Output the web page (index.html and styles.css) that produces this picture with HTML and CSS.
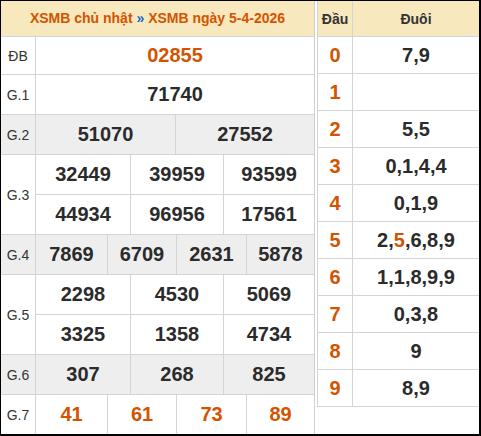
FILE: index.html
```html
<!DOCTYPE html>
<html lang="vi">
<head>
<meta charset="utf-8">
<title>XSMB ngày 5-4-2026</title>
<link rel="stylesheet" href="styles.css">
</head>
<body>
<div class="frame">
  <div class="results">
    <div class="rhead"><span class="hl">XSMB chủ nhật</span> <span class="sep">»</span> <span class="hl">XSMB ngày 5-4-2026</span></div>
    <div class="prize prize-db">
      <div class="lbl">ĐB</div>
      <div class="nums c1"><div class="n hot">02855</div></div>
    </div>
    <div class="prize">
      <div class="lbl">G.1</div>
      <div class="nums c1"><div class="n">71740</div></div>
    </div>
    <div class="prize alt">
      <div class="lbl">G.2</div>
      <div class="nums c2"><div class="n">51070</div><div class="n">27552</div></div>
    </div>
    <div class="prize dbl">
      <div class="lbl">G.3</div>
      <div class="stack">
        <div class="nums c3"><div class="n">32449</div><div class="n">39959</div><div class="n">93599</div></div>
        <div class="nums c3"><div class="n">44934</div><div class="n">96956</div><div class="n">17561</div></div>
      </div>
    </div>
    <div class="prize alt">
      <div class="lbl">G.4</div>
      <div class="nums c4"><div class="n">7869</div><div class="n">6709</div><div class="n">2631</div><div class="n">5878</div></div>
    </div>
    <div class="prize dbl">
      <div class="lbl">G.5</div>
      <div class="stack">
        <div class="nums c3"><div class="n">2298</div><div class="n">4530</div><div class="n">5069</div></div>
        <div class="nums c3"><div class="n">3325</div><div class="n">1358</div><div class="n">4734</div></div>
      </div>
    </div>
    <div class="prize alt">
      <div class="lbl">G.6</div>
      <div class="nums c3"><div class="n">307</div><div class="n">268</div><div class="n">825</div></div>
    </div>
    <div class="prize last">
      <div class="lbl">G.7</div>
      <div class="nums c4"><div class="n hot">41</div><div class="n hot">61</div><div class="n hot">73</div><div class="n hot">89</div></div>
    </div>
  </div>
  <div class="loto">
    <div class="lrow lhead"><div class="dau">Đầu</div><div class="duoi">Đuôi</div></div>
    <div class="lrow"><div class="dau">0</div><div class="duoi">7,9</div></div>
    <div class="lrow"><div class="dau">1</div><div class="duoi"></div></div>
    <div class="lrow"><div class="dau">2</div><div class="duoi">5,5</div></div>
    <div class="lrow"><div class="dau">3</div><div class="duoi">0,1,4,4</div></div>
    <div class="lrow"><div class="dau">4</div><div class="duoi">0,1,9</div></div>
    <div class="lrow"><div class="dau">5</div><div class="duoi">2,<span class="hot">5</span>,6,8,9</div></div>
    <div class="lrow"><div class="dau">6</div><div class="duoi">1,1,8,9,9</div></div>
    <div class="lrow"><div class="dau">7</div><div class="duoi">0,3,8</div></div>
    <div class="lrow"><div class="dau">8</div><div class="duoi">9</div></div>
    <div class="lrow"><div class="dau">9</div><div class="duoi">8,9</div></div>
  </div>
</div>
</body>
</html>
```

FILE: styles.css
```css
* { box-sizing: border-box; }
html, body { margin: 0; padding: 0; background: #fff; }
body { font-family: "Liberation Sans", Arial, sans-serif; color: #2b2b2b; }

.frame {
  width: 481px;
  height: 436px;
  border: 1px solid #000;
  border-right-width: 2px;
  border-bottom-width: 2px;
  display: flex;
  align-items: flex-start;
  gap: 2px;
  overflow: hidden;
  background: #fff;
}

/* results table */
.results {
  width: 314px;
  flex: none;
  border-right: 1px solid #cfcfcf;
  height: 433px;
}
.rhead {
  height: 36px;
  line-height: 35px;
  background: #f8e8be;
  border-bottom: 1px solid #d4d4d4;
  text-align: center;
  font-weight: bold;
  font-size: 14px;
  color: #d35400;
}
.rhead .sep { color: #1a6bc4; }

.prize {
  display: flex;
  height: 40px;
  border-bottom: 1px solid #d4d4d4;
}
.prize-db { height: 38px; }
.prize.dbl { height: 80px; }
.prize.last { border-bottom: none; height: 39px; }
.prize.alt { background: #eeeeee; }

.lbl {
  width: 35px;
  flex: none;
  border-right: 1px solid #d4d4d4;
  display: flex;
  align-items: center;
  justify-content: center;
  font-size: 14px;
  color: #333;
}
.stack { flex: 1; display: flex; flex-direction: column; }
.stack .nums { flex: 1; }
.stack .nums:first-child { border-bottom: 1px solid #d4d4d4; }

.nums {
  flex: 1;
  display: grid;
  align-items: center;
}
.c1 { grid-template-columns: 1fr; }
.c2 { grid-template-columns: 1fr 1fr; }
.c3 { grid-template-columns: 94px 93px 1fr; }
.c4 { grid-template-columns: 71px 69px 70px 1fr; }

.n {
  height: 100%;
  display: flex;
  align-items: center;
  justify-content: center;
  font-weight: bold;
  font-size: 20px;
  color: #2b2b2b;
}
.n + .n { border-left: 1px solid #d4d4d4; }
.hot, .n.hot { color: #d35400; }

/* loto table */
.loto {
  width: 162px;
  flex: none;
  border-left: 1px solid #d4d4d4;
}
.lrow {
  display: flex;
  height: 37px;
  border-bottom: 1px solid #d4d4d4;
}
.lrow.lhead {
  height: 36px;
  background: #f8e8be;
}
.dau {
  width: 35px;
  flex: none;
  border-right: 1px solid #d4d4d4;
  display: flex;
  align-items: center;
  justify-content: center;
  font-weight: bold;
  font-size: 20px;
  color: #d35400;
}
.duoi {
  flex: 1;
  display: flex;
  align-items: center;
  justify-content: center;
  font-weight: bold;
  font-size: 20px;
  color: #2b2b2b;
}
.lhead .dau, .lhead .duoi {
  font-size: 14px;
  color: #333;
}
```
